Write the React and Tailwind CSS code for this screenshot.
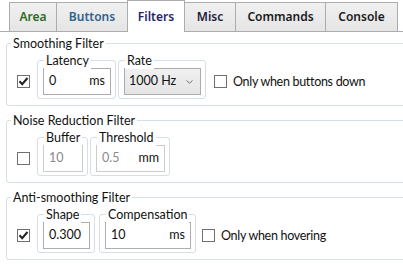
const tabs = [
  { name: 'Area', w: 'w-[48px]', color: 'text-[#2c6b1e]' },
  { name: 'Buttons', w: 'w-[72px]', color: 'text-[#2f628f]' },
  { name: 'Filters', w: 'w-[58px]', color: 'text-[#1f1f6b]', active: true },
  { name: 'Misc', w: 'w-[52px]', color: 'text-[#1d1d3a]' },
  { name: 'Commands', w: 'w-[91px]', color: 'text-[#1a1a1a]' },
  { name: 'Console', w: 'w-[73px]', color: 'text-[#1a1a1a]' },
];

function CheckBox({ checked }) {
  return (
    <div className="w-[13px] h-[13px] border border-[#707070] bg-white flex items-center justify-center shrink-0">
      {checked && (
        <svg width="11" height="11" viewBox="0 0 11 11">
          <path d="M1.5 5.3 L4.2 8.2 L9.5 2" fill="none" stroke="#212121" strokeWidth="2" />
        </svg>
      )}
    </div>
  );
}

function Group({ title, children }) {
  return (
    <div className="relative ml-[6px] w-[410px] h-[63px] border border-[#d5dfe5] rounded-[3px] pt-[16px] pl-[10px]">
      <div className="absolute -top-[8px] left-[4px] px-[2px] bg-white leading-[16px] text-[12.5px] text-[#111]">
        {title}
      </div>
      <div className="flex items-start">{children}</div>
    </div>
  );
}

function SubGroup({ label, className, children }) {
  return (
    <div className={`relative h-[39px] border border-[#d5dfe5] rounded-[3px] pt-[7px] pl-[5px] pr-[4px] ${className}`}>
      <div className="absolute -top-[8px] left-[6px] px-[2px] bg-white leading-[16px] text-[12.5px] text-[#111]">
        {label}
      </div>
      {children}
    </div>
  );
}

function TextBox({ value, unit, width, disabled }) {
  return (
    <div
      className={`h-[27px] flex items-center justify-between pl-[5px] pr-[5px] bg-white border text-[12.5px] ${width} ${
        disabled ? 'border-[#cccccc] text-[#8a8a8a]' : 'border-[#abadb3] text-[#111]'
      }`}
    >
      <span>{value}</span>
      {unit && <span className="text-[#111]">{unit}</span>}
    </div>
  );
}

function OptionCheck({ checked, label, className }) {
  return (
    <div className={`flex items-center mt-[15px] ${className}`}>
      <CheckBox checked={checked} />
      <span className="ml-[6px] text-[12.5px] leading-[13px] tracking-[-0.3px] text-[#111]">{label}</span>
    </div>
  );
}

export default function App() {
  return (
    <div className="w-[403px] h-[265px] bg-white overflow-hidden font-['Lato','Liberation_Sans',sans-serif]">
      <div className="flex items-end h-[32px] pl-[9px] border-b border-[#acacac] font-['Noto_Sans','Liberation_Sans',sans-serif]">
        {tabs.map((t, i) => (
          <div
            key={t.name}
            className={`${t.w} ${i > 0 ? '-ml-px' : ''} flex items-center justify-center border-t border-l border-r border-[#acacac] text-[12px] font-semibold ${t.color} ${
              t.active ? 'h-[32px] -mb-px bg-white relative z-10' : 'h-[29px] bg-gradient-to-b from-[#f0f0f0] to-[#e5e5e5]'
            }`}
          >
            {t.name}
          </div>
        ))}
      </div>

      <div className="pt-[11px] flex flex-col gap-[14px]">
        <Group title="Smoothing Filter">
          <div className="mt-[15px] mr-[7px]">
            <CheckBox checked />
          </div>
          <SubGroup label="Latency">
            <TextBox value="0" unit="ms" width="w-[68px]" />
          </SubGroup>
          <SubGroup label="Rate" className="ml-[2px]">
            <div className="w-[77px] h-[27px] flex items-center justify-between pl-[4px] pr-[7px] border border-[#acacac] bg-gradient-to-b from-[#f0f0f0] to-[#e5e5e5] text-[12.5px] text-[#111]">
              <span>1000 Hz</span>
              <svg width="7" height="4" viewBox="0 0 7 4">
                <path d="M0.5 0.5 L3.5 3.2 L6.5 0.5" fill="none" stroke="#707070" strokeWidth="1" />
              </svg>
            </div>
          </SubGroup>
          <OptionCheck label="Only when buttons down" className="ml-[8px]" />
        </Group>

        <Group title="Noise Reduction Filter">
          <div className="mt-[15px] mr-[7px]">
            <CheckBox />
          </div>
          <SubGroup label="Buffer">
            <TextBox value="10" width="w-[40px]" disabled />
          </SubGroup>
          <SubGroup label="Threshold" className="ml-[2px]">
            <TextBox value="0.5" unit="mm" width="w-[69px]" disabled />
          </SubGroup>
        </Group>

        <Group title="Anti-smoothing Filter">
          <div className="mt-[15px] mr-[7px]">
            <CheckBox checked />
          </div>
          <SubGroup label="Shape">
            <TextBox value="0.300" width="w-[47px]" />
          </SubGroup>
          <SubGroup label="Compensation" className="ml-[4px]">
            <TextBox value="10" unit="ms" width="w-[86px]" />
          </SubGroup>
          <OptionCheck label="Only when hovering" className="ml-[6px]" />
        </Group>
      </div>
    </div>
  );
}
